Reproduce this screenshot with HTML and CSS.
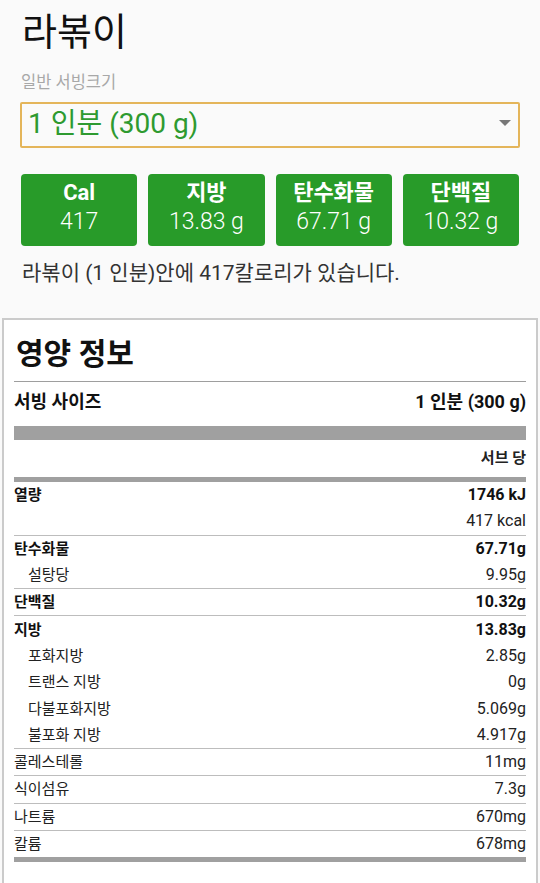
FILE: index.html
```html
<!DOCTYPE html>
<html lang="ko">
<head>
<meta charset="utf-8">
<title>라볶이</title>
<link rel="stylesheet" href="styles.css">
</head>
<body>
<div class="top">
  <h1 class="title">라볶이</h1>
  <div class="label">일반 서빙크기</div>
  <div class="select">
    <span class="select-text">1 인분 (300 g)</span>
    <svg class="caret" width="12" height="6" viewBox="0 0 12 6"><path d="M0 0 L12 0 L6 6 Z" fill="#777"/></svg>
  </div>
  <div class="macros">
    <div class="macro"><div class="m-label">Cal</div><div class="m-value">417</div></div>
    <div class="macro"><div class="m-label">지방</div><div class="m-value">13.83 g</div></div>
    <div class="macro"><div class="m-label">탄수화물</div><div class="m-value">67.71 g</div></div>
    <div class="macro"><div class="m-label">단백질</div><div class="m-value">10.32 g</div></div>
  </div>
  <p class="summary">라볶이 (1 인분)안에 417칼로리가 있습니다.</p>
</div>

<div class="card">
  <h2 class="card-title">영양 정보</h2>
  <div class="row serving"><span>서빙 사이즈</span><span>1 인분 (300 g)</span></div>
  <div class="bar-thick"></div>
  <div class="row per"><span></span><span>서브 당</span></div>
  <div class="bar-mid"></div>

  <div class="group">
    <div class="row bold"><span class="k">열량</span><span class="v">1746 kJ</span></div>
    <div class="row"><span></span><span class="v">417 kcal</span></div>
  </div>
  <div class="group">
    <div class="row bold"><span class="k">탄수화물</span><span class="v">67.71g</span></div>
    <div class="row sub"><span class="k">설탕당</span><span class="v">9.95g</span></div>
  </div>
  <div class="group">
    <div class="row bold"><span class="k">단백질</span><span class="v">10.32g</span></div>
  </div>
  <div class="group">
    <div class="row bold"><span class="k">지방</span><span class="v">13.83g</span></div>
    <div class="row sub"><span class="k">포화지방</span><span class="v">2.85g</span></div>
    <div class="row sub"><span class="k">트랜스 지방</span><span class="v">0g</span></div>
    <div class="row sub"><span class="k">다불포화지방</span><span class="v">5.069g</span></div>
    <div class="row sub"><span class="k">불포화 지방</span><span class="v">4.917g</span></div>
  </div>
  <div class="group">
    <div class="row"><span class="k">콜레스테롤</span><span class="v">11mg</span></div>
  </div>
  <div class="group">
    <div class="row"><span class="k">식이섬유</span><span class="v">7.3g</span></div>
  </div>
  <div class="group">
    <div class="row"><span class="k">나트륨</span><span class="v">670mg</span></div>
  </div>
  <div class="group last">
    <div class="row"><span class="k">칼륨</span><span class="v">678mg</span></div>
  </div>
  <div class="bar-mid"></div>
  <div class="card-end"></div>
</div>
</body>
</html>
```

FILE: styles.css
```css
* { box-sizing: border-box; }

html, body {
  margin: 0;
  padding: 0;
  background: #fafafa;
  font-family: Roboto, "Noto Sans CJK KR", sans-serif;
  color: #212121;
}

.top {
  padding: 0 20px;
}

.title {
  margin: 0;
  padding: 8px 0 0 2px;
  font-size: 38px;
  line-height: 48px;
  font-weight: 400;
  color: #111;
}

.label {
  margin-top: 16px;
  padding-left: 1px;
  font-size: 16.5px;
  line-height: 22px;
  color: #a8a8a8;
}

.select {
  margin-top: 8px;
  height: 46px;
  border: 2px solid #e4b55a;
  border-radius: 2px;
  display: flex;
  align-items: center;
  justify-content: space-between;
  padding: 0 7px 2px 6px;
}

.select-text {
  font-size: 28px;
  line-height: 34px;
  color: #2e9a30;
}

.caret {
  display: block;
  margin-top: -2px;
}

.macros {
  margin: 26px 1px 0 1px;
  display: grid;
  grid-template-columns: repeat(4, 1fr);
  column-gap: 11px;
}

.macro {
  height: 72px;
  background: #289b29;
  border-radius: 4px;
  color: #fff;
  text-align: center;
  padding-top: 4px;
}

.m-label {
  font-size: 22px;
  line-height: 30px;
  font-weight: 700;
}

.m-value {
  font-size: 23px;
  line-height: 28px;
  font-weight: 300;
}

.summary {
  margin: 13px 0 0 2px;
  font-size: 21px;
  line-height: 28px;
  color: #333;
}

.card {
  margin: 31px 2px 0 2px;
  border: 2px solid #cbcbcb;
  border-bottom: none;
  background: #fff;
  padding: 0 10px;
}

.card-title {
  margin: 0;
  height: 62px;
  padding: 12px 0 0 2px;
  font-size: 30px;
  line-height: 44px;
  font-weight: 700;
  color: #111;
  border-bottom: 1px solid #9e9e9e;
}

.row {
  display: flex;
  justify-content: space-between;
  align-items: center;
  height: 26.3px;
  line-height: 20px;
  color: #222;
}

.row .k {
  font-size: 15px;
}

.row .v {
  font-size: 16px;
}

.row.bold {
  font-weight: 700;
  color: #111;
}

.row.sub {
  padding-left: 14px;
}

.row.serving {
  height: 33px;
  padding-top: 7px;
  font-size: 18px;
  font-weight: 700;
  color: #111;
}

.bar-thick {
  margin-top: 11px;
  height: 14px;
  background: #a0a0a0;
}

.row.per {
  height: 37px;
  font-size: 15px;
  font-weight: 700;
  padding-bottom: 1px;
}

.bar-mid {
  height: 5px;
  background: #a0a0a0;
}

.group {
  border-bottom: 1px solid #bdbdbd;
}

.group.last {
  border-bottom: none;
}

.card-end {
  height: 40px;
}
```
